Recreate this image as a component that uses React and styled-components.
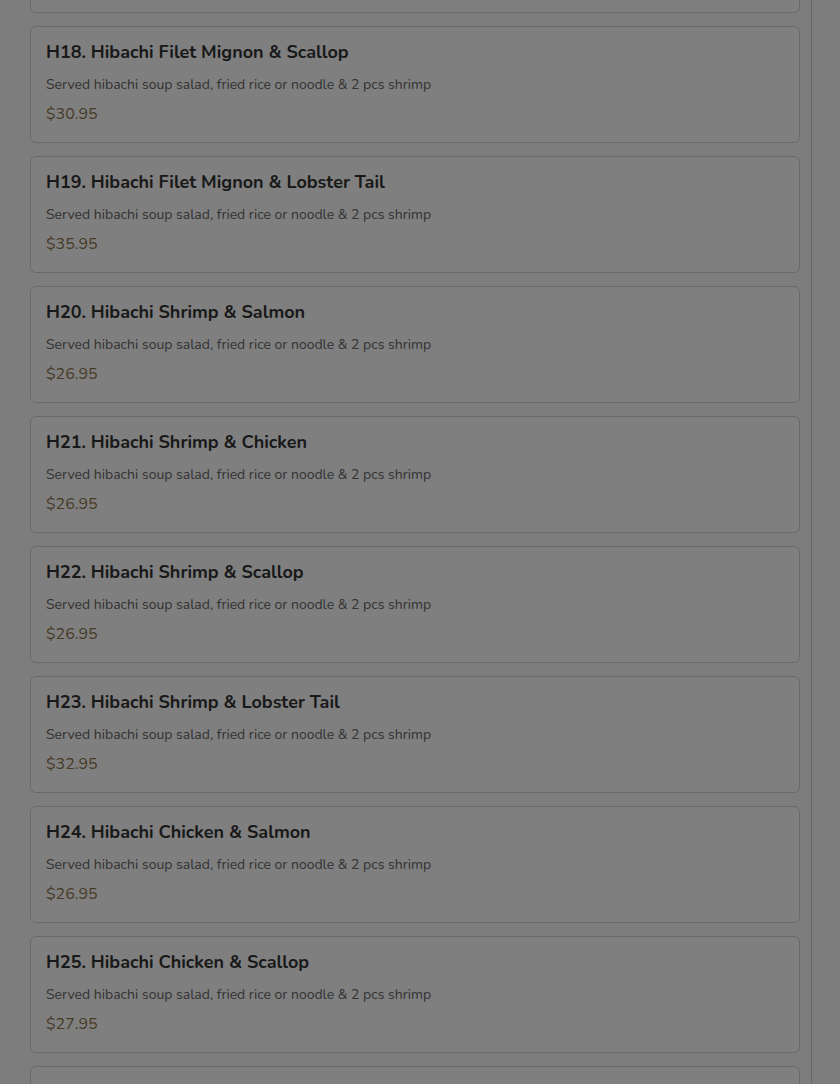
import React from "react";
import styled, { createGlobalStyle } from "styled-components";

const GlobalStyle = createGlobalStyle`
  html, body {
    margin: 0;
    padding: 0;
    background: #fbfbfb;
    overflow: hidden;
  }
  body {
    font-family: "Nunito", "Lato", "Open Sans", sans-serif;
  }
`;

const Page = styled.div`
  height: 1084px;
  overflow: hidden;
`;

const Panel = styled.div`
  display: flow-root;
  width: 812px;
  height: 100%;
  box-sizing: border-box;
  border-right: 1px solid #cfcfcf;
  padding: 0 11px 0 30px;
  background: #fbfbfb;
`;

const List = styled.div`
  display: flex;
  flex-direction: column;
  gap: 13px;
  margin-top: -104px;
`;

const Card = styled.div`
  background: #fff;
  border: 1px solid #d2d2d2;
  border-radius: 6px;
  padding: 14px 16px 17px 15px;
  height: 117px;
  box-sizing: border-box;
  display: flex;
  flex-direction: column;
`;

const Title = styled.div`
  font-size: 18px;
  line-height: 22px;
  font-weight: 700;
  color: #333;
`;

const Desc = styled.div`
  margin-top: 13px;
  font-size: 14px;
  line-height: 18px;
  color: #666;
`;

const Price = styled.div`
  margin-top: 10px;
  font-size: 16px;
  line-height: 20px;
  color: #8e7650;
`;

const Overlay = styled.div`
  position: fixed;
  inset: 0;
  background: rgba(0, 0, 0, 0.5);
`;

const DESC = "Served hibachi soup salad, fried rice or noodle & 2 pcs shrimp";

const items = [
  { code: "H17", name: "Hibachi Filet Mignon & Salmon", price: "$29.95" },
  { code: "H18", name: "Hibachi Filet Mignon & Scallop", price: "$30.95" },
  { code: "H19", name: "Hibachi Filet Mignon & Lobster Tail", price: "$35.95" },
  { code: "H20", name: "Hibachi Shrimp & Salmon", price: "$26.95" },
  { code: "H21", name: "Hibachi Shrimp & Chicken", price: "$26.95" },
  { code: "H22", name: "Hibachi Shrimp & Scallop", price: "$26.95" },
  { code: "H23", name: "Hibachi Shrimp & Lobster Tail", price: "$32.95" },
  { code: "H24", name: "Hibachi Chicken & Salmon", price: "$26.95" },
  { code: "H25", name: "Hibachi Chicken & Scallop", price: "$27.95" },
  { code: "H26", name: "Hibachi Chicken & Lobster Tail", price: "$32.95" },
];

export default function App() {
  return (
    <Page>
      <GlobalStyle />
      <Panel>
        <List>
          {items.map((it) => (
            <Card key={it.code}>
              <Title>
                {it.code}. {it.name}
              </Title>
              <Desc>{DESC}</Desc>
              <Price>{it.price}</Price>
            </Card>
          ))}
        </List>
      </Panel>
      <Overlay />
    </Page>
  );
}
